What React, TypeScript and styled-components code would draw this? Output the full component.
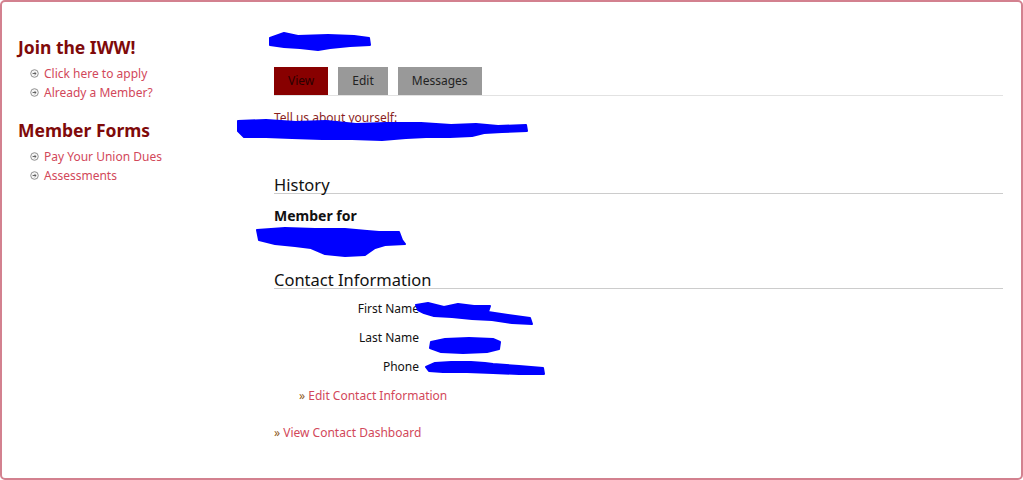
import React from 'react';
import styled, { createGlobalStyle } from 'styled-components';

const GlobalStyle = createGlobalStyle`
  html, body {
    margin: 0;
    padding: 0;
    background: #ffffff;
  }
  body {
    font-family: 'Noto Sans', 'Open Sans', sans-serif;
  }
`;

type ScribbleProps = {
  width: number;
  height: number;
  points: string;
};

function Scribble({ width, height, points }: ScribbleProps) {
  return (
    <svg width={width} height={height} viewBox={`0 0 ${width} ${height}`}>
      <polygon points={points} fill="#0000ff" stroke="#0000ff" strokeWidth={2} strokeLinejoin="round" />
    </svg>
  );
}

function BulletIcon() {
  return (
    <svg width="9" height="9" viewBox="0 0 9 9">
      <circle cx="4.5" cy="4.5" r="3.8" fill="#f4f4f4" stroke="#888" strokeWidth="0.9" />
      <path d="M2.6 4.5 H6 M4.6 3.1 L6 4.5 L4.6 5.9" fill="none" stroke="#555" strokeWidth="0.9" />
    </svg>
  );
}

const sideLinks = [
  { title: 'Join the IWW!', links: ['Click here to apply', 'Already a Member?'] },
  { title: 'Member Forms', links: ['Pay Your Union Dues', 'Assessments'] },
];

const tabs = [
  { label: 'View', active: true },
  { label: 'Edit', active: false },
  { label: 'Messages', active: false },
];

const contactRows = [
  { label: 'First Name', scribble: { w: 120, h: 28, x: -14, y: -8, pts: '2,4 14,2 30,6 44,3 60,5 76,5 74,11 94,14 116,17 118,23 98,22 78,19 58,18 38,16 20,15 10,12 4,9' } },
  { label: 'Last Name', scribble: { w: 76, h: 20, x: -1, y: -2, pts: '4,6 18,3 42,2 66,3 73,6 72,13 60,16 36,17 14,16 3,12' } },
  { label: 'Phone', scribble: { w: 124, h: 20, x: -5, y: -8, pts: '3,8 12,4 28,3 48,3 62,4 70,5 96,7 120,9 121,15 96,15 70,14 44,13 20,13 6,12' } },
];

export default function App() {
  return (
    <>
      <GlobalStyle />
      <Frame>
        <Sidebar>
          {sideLinks.map((block) => (
            <SideBlock key={block.title}>
              <SideTitle>{block.title}</SideTitle>
              <SideList>
                {block.links.map((link) => (
                  <SideItem key={link}>
                    <BulletIcon />
                    <SideLink href="#">{link}</SideLink>
                  </SideItem>
                ))}
              </SideList>
            </SideBlock>
          ))}
        </Sidebar>

        <Main>
          <TitleRow>
            <Scribble width={104} height={19} points="2,6 16,1 30,4 60,3 86,4 101,6 102,13 82,14 62,16 50,18 32,16 16,15 2,13" />
          </TitleRow>

          <TabBar>
            {tabs.map((tab) => (
              <Tab key={tab.label} $active={tab.active}>
                {tab.label}
              </Tab>
            ))}
          </TabBar>

          <AboutBlock>
            <AboutLabel>Tell us about yourself:</AboutLabel>
            <Redacted $x={-38} $y={-1}>
              <Scribble
                width={294}
                height={26}
                points="2,4 30,3 60,5 90,4 120,7 150,6 185,6 215,8 240,7 262,9 290,8 291,14 266,15 248,16 236,19 214,20 190,20 170,21 146,23 116,22 86,22 56,21 30,20 8,20 2,14"
              />
            </Redacted>
          </AboutBlock>

          <SectionTitle>History</SectionTitle>
          <Term>Member for</Term>
          <MemberScribble>
            <Scribble width={152} height={31} points="2,4 30,2 60,3 90,3 112,5 124,6 144,6 147,14 150,18 130,19 120,22 110,29 90,30 70,28 56,22 40,20 20,18 4,14" />
          </MemberScribble>

          <SectionTitle>Contact Information</SectionTitle>
          <ContactTable>
            {contactRows.map((row) => (
              <ContactRow key={row.label}>
                <ContactLabel>{row.label}</ContactLabel>
                <ContactValue>
                  <Redacted $x={row.scribble.x} $y={row.scribble.y}>
                    <Scribble width={row.scribble.w} height={row.scribble.h} points={row.scribble.pts} />
                  </Redacted>
                </ContactValue>
              </ContactRow>
            ))}
          </ContactTable>

          <EditLinkRow>
            <Raquo>»</Raquo> <ContentLink href="#">Edit Contact Information</ContentLink>
          </EditLinkRow>
          <DashboardRow>
            <Raquo>»</Raquo> <ContentLink href="#">View Contact Dashboard</ContentLink>
          </DashboardRow>
        </Main>
      </Frame>
    </>
  );
}

const Frame = styled.div`
  box-sizing: border-box;
  width: 1023px;
  height: 480px;
  border: 2px solid #d3818f;
  border-radius: 5px;
  padding: 0 18px 0 16px;
  display: grid;
  grid-template-columns: 256px 1fr;
  overflow: hidden;
`;

const Sidebar = styled.aside`
  padding-top: 33px;
`;

const SideBlock = styled.div`
  margin-bottom: 16px;
`;

const SideTitle = styled.h2`
  margin: 0 0 5px;
  font-size: 17.5px;
  line-height: 24px;
  font-weight: bold;
  color: #7f0a0a;
`;

const SideList = styled.ul`
  list-style: none;
  margin: 0;
  padding: 0 0 0 12px;
`;

const SideItem = styled.li`
  display: flex;
  align-items: center;
  gap: 5px;
  height: 19px;
  font-size: 12px;
`;

const SideLink = styled.a`
  color: #d2485a;
  text-decoration: none;
`;

const Main = styled.main`
  padding-top: 30px;
  display: flex;
  flex-direction: column;
  align-items: stretch;
`;

const TitleRow = styled.div`
  height: 20px;
  margin-left: -6px;
  margin-bottom: 15px;
`;

const TabBar = styled.nav`
  display: flex;
  gap: 10px;
  border-bottom: 1px solid #e2e2e2;
`;

const Tab = styled.span<{ $active: boolean }>`
  display: inline-block;
  height: 28px;
  line-height: 28px;
  padding: 0 14px;
  font-size: 12px;
  color: ${(p) => (p.$active ? '#2a0000' : '#222222')};
  background: ${(p) => (p.$active ? '#880000' : '#999999')};
`;

const AboutBlock = styled.div`
  position: relative;
  margin-top: 14px;
  height: 61px;
`;

const AboutLabel = styled.div`
  font-size: 12px;
  line-height: 16px;
  color: #8a1e1e;
`;

const Redacted = styled.div<{ $x: number; $y: number }>`
  position: absolute;
  left: ${(p) => p.$x}px;
  top: ${(p) => p.$y + 8}px;
  line-height: 0;
`;

const SectionTitle = styled.h3`
  margin: 6px 0 0;
  font-size: 16.5px;
  font-weight: normal;
  line-height: 16px;
  color: #111111;
  border-bottom: 1px solid #cccccc;
`;

const Term = styled.div`
  margin-top: 12px;
  font-size: 14px;
  line-height: 20px;
  font-weight: bold;
  color: #111111;
`;

const MemberScribble = styled.div`
  margin: 0 0 9px -19px;
  line-height: 0;
`;

const ContactTable = styled.div`
  margin-top: 5px;
  display: flex;
  flex-direction: column;
`;

const ContactRow = styled.div`
  display: grid;
  grid-template-columns: 145px 1fr;
  column-gap: 9px;
  height: 29px;
  align-items: center;
`;

const ContactLabel = styled.div`
  text-align: right;
  font-size: 12px;
  color: #111111;
`;

const ContactValue = styled.div`
  position: relative;
  height: 16px;
`;

const EditLinkRow = styled.div`
  margin-top: 6px;
  padding-left: 25px;
  font-size: 12px;
  line-height: 18px;
`;

const DashboardRow = styled.div`
  margin-top: 19px;
  font-size: 12px;
  line-height: 18px;
`;

const Raquo = styled.span`
  color: #8d5a1a;
`;

const ContentLink = styled.a`
  color: #d2485a;
  text-decoration: none;
`;
